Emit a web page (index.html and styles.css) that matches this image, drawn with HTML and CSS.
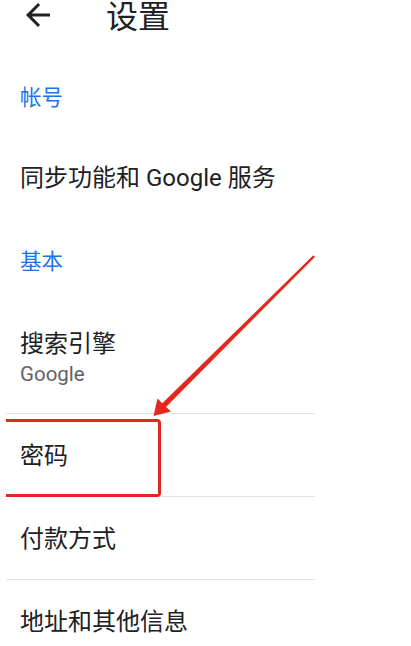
FILE: index.html
```html
<!DOCTYPE html>
<html lang="zh-CN">
<head>
<meta charset="utf-8">
<title>设置</title>
<link rel="stylesheet" href="styles.css">
</head>
<body>
<div class="page">
  <header class="toolbar">
    <svg class="back" viewBox="0 0 24 24" width="36" height="36" aria-hidden="true">
      <path d="M20 11H7.83l5.59-5.59L12 4l-8 8 8 8 1.41-1.41L7.83 13H20v-2z" fill="#202124"/>
    </svg>
    <h1 class="title">设置</h1>
  </header>
  <div class="list">
    <div class="section-head">帐号</div>
    <div class="item item-plain">同步功能和 Google 服务</div>
    <div class="section-head">基本</div>
    <div class="item item-two">
      <div class="item-title">搜索引擎</div>
      <div class="item-sub">Google</div>
    </div>
    <div class="item item-div">密码</div>
    <div class="item item-div">付款方式</div>
    <div class="item item-div">地址和其他信息</div>
  </div>
  <div class="mark-box"></div>
  <svg class="mark-arrow" width="411" height="646" viewBox="0 0 411 646" aria-hidden="true">
    <polygon points="313.3,255.3 314.9,256.9 166,407 171,411.5 153.5,416 157.5,398.5 162.3,403.3" fill="#e5271b"/>
  </svg>
</div>
</body>
</html>
```
FILE: styles.css
```css
html, body {
  margin: 0;
  padding: 0;
  background: #ffffff;
}
body {
  font-family: Roboto, "Noto Sans CJK SC", "Noto Sans", sans-serif;
  color: #202124;
}
.page {
  position: relative;
  width: 411px;
  height: 646px;
  overflow: hidden;
}
.toolbar {
  display: flex;
  align-items: center;
  height: 34px;
  padding-left: 20px;
  padding-bottom: 22px;
}
.back {
  flex: none;
  margin-top: -4px;
}
.title {
  margin: 0 0 0 50px;
  font-size: 32px;
  font-weight: 400;
  line-height: 34px;
}
.list {
  margin-left: 6px;
  width: 309px;
}
.section-head {
  padding: 28px 0 24px 14px;
  font-size: 21.5px;
  line-height: 28px;
  color: #1a73e8;
}
.item {
  padding-left: 14px;
  font-size: 24px;
  line-height: 30px;
}
.item-plain {
  padding-top: 27px;
  padding-bottom: 27px;
}
.item-two {
  padding-top: 29px;
  padding-bottom: 24px;
}
.item-sub {
  font-size: 20.5px;
  line-height: 30px;
  color: #5f6368;
}
.item-div {
  border-top: 1px solid #e2e2e2;
  padding-top: 27px;
  padding-bottom: 25px;
}
.mark-box {
  position: absolute;
  left: 6px;
  top: 419px;
  width: 152px;
  height: 72px;
  border: 3px solid #e2281d;
  border-left: none;
  border-radius: 0 4px 4px 0;
}
.mark-arrow {
  position: absolute;
  left: 0;
  top: 0;
  pointer-events: none;
}
```
